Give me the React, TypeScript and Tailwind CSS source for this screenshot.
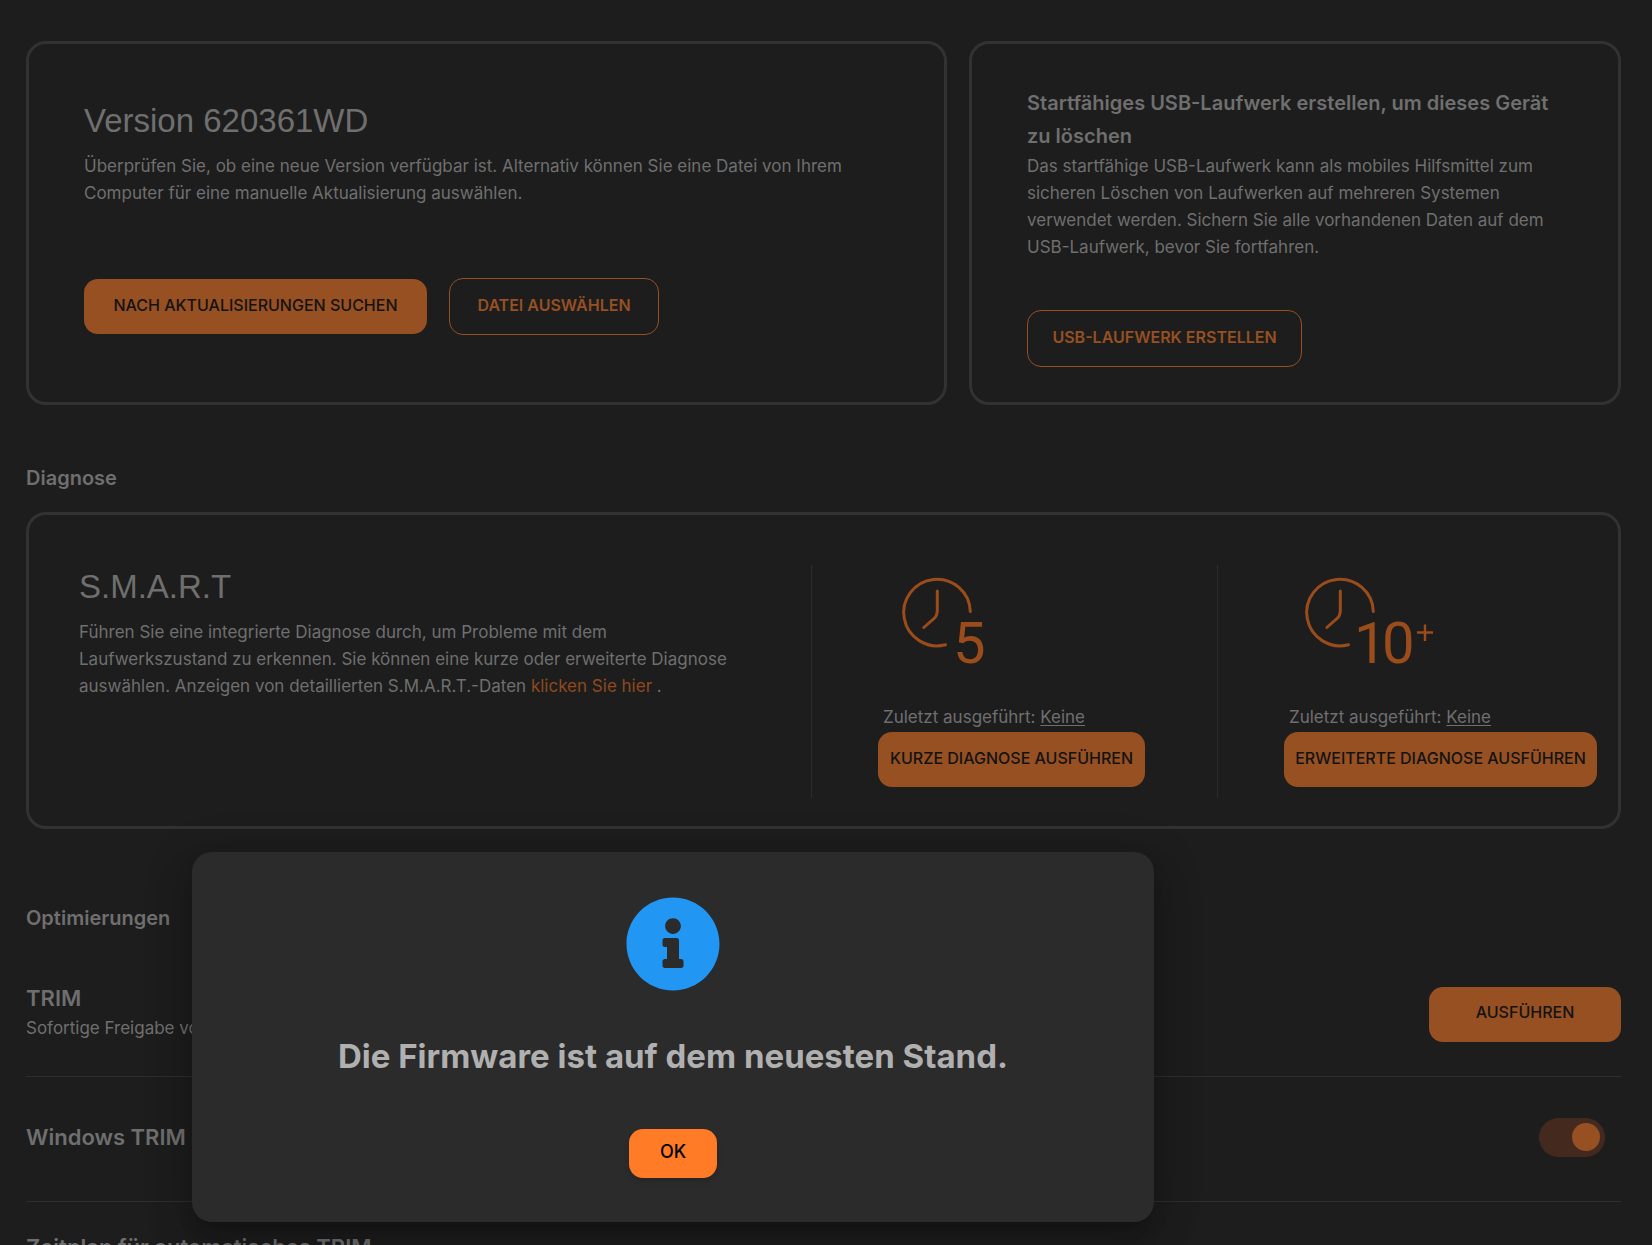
import { useState } from 'react';
import type { ButtonHTMLAttributes, ReactNode } from 'react';
import { FaInfoCircle } from 'react-icons/fa';
import clsx from 'clsx';

type ButtonProps = ButtonHTMLAttributes<HTMLButtonElement> & {
  variant?: 'filled' | 'outline';
};

function Button({ variant = 'filled', className, ...props }: ButtonProps) {
  return (
    <button
      type="button"
      className={clsx(
        'rounded-[14px] text-center text-base whitespace-nowrap pb-1',
        variant === 'filled' && 'h-[55px] bg-[#965022] font-medium text-[#131313]',
        variant === 'outline' && 'h-[57px] border border-[#965022] font-semibold text-[#965022]',
        className
      )}
      {...props}
    />
  );
}

function Card({ className, children }: { className?: string; children: ReactNode }) {
  return <div className={clsx('rounded-[20px] border-3 border-[#323232]', className)}>{children}</div>;
}

function ClockIcon({ label, children }: { label: string; children: ReactNode }) {
  return (
    <svg
      width="160"
      height="112"
      viewBox="0 0 160 112"
      role="img"
      aria-label={label}
      fill="none"
      stroke="#9b4c1b"
      strokeWidth="3"
      strokeLinecap="round"
    >
      {children}
    </svg>
  );
}

// Clock face with a gap at the lower right, where the minutes are written
function ClockFace() {
  return (
    <>
      <path d="M92.3 46.500A33.300 33.300 0 1 0 67.500 79.700" />
      <path d="M59.300 26V46Q59.300 50.500 56 53.500L45.800 62.500" />
    </>
  );
}

interface DiagnosticProps {
  icon: ReactNode;
  action: string;
  buttonClass: string;
}

function Diagnostic({ icon, action, buttonClass }: DiagnosticProps) {
  return (
    <div className="flex h-[233px] flex-col items-start justify-between border-l border-[#2c2c2c] pb-[11px] pl-[66px]">
      {icon}
      <div>
        <p className="pl-[5px] pb-px">
          Zuletzt ausgeführt: <span className="underline underline-offset-2">Keine</span>
        </p>
        <Button className={buttonClass}>{action}</Button>
      </div>
    </div>
  );
}

export default function App() {
  const [showDialog, setShowDialog] = useState(true);
  const [autoTrim, setAutoTrim] = useState(true);

  return (
    <div className="relative h-screen overflow-hidden bg-[#1d1d1d] font-[Inter,sans-serif] text-[17px] leading-[27px] text-[#6f6f6f]">
      <main className="pt-[41px] pr-[31px] pl-[26px]">
        <section className="grid grid-cols-[921fr_652fr] gap-[22px]">
          <Card className="px-[55px] pt-[55px]">
            <h1 className="mb-[10px] font-['Liberation_Sans',sans-serif] text-[33px] leading-[44px]">
              Version 620361WD
            </h1>
            <p>
              Überprüfen Sie, ob eine neue Version verfügbar ist. Alternativ können Sie eine Datei von Ihrem Computer für
              eine manuelle Aktualisierung auswählen.
            </p>
            <div className="mt-[71px] flex items-center gap-[22px]">
              <Button className="w-[343px]">NACH AKTUALISIERUNGEN SUCHEN</Button>
              <Button variant="outline" className="w-[210px]">
                DATEI AUSWÄHLEN
              </Button>
            </div>
          </Card>

          <Card className="px-[55px] pt-[43px] pb-[35px]">
            <h2 className="text-xl leading-[33px] font-semibold">
              Startfähiges USB-Laufwerk erstellen, um dieses Gerät zu löschen
            </h2>
            <p>
              Das startfähige USB-Laufwerk kann als mobiles Hilfsmittel zum sicheren Löschen von Laufwerken auf mehreren
              Systemen verwendet werden. Sichern Sie alle vorhandenen Daten auf dem USB-Laufwerk, bevor Sie fortfahren.
            </p>
            <Button variant="outline" className="mt-[49px] w-[275px]">
              USB-LAUFWERK ERSTELLEN
            </Button>
          </Card>
        </section>

        <section className="mt-[57px]">
          <h2 className="mb-[17px] text-xl leading-[33px] font-semibold">Diagnose</h2>
          <Card className="grid grid-cols-[782fr_406fr_401fr] pt-[50px] pb-7">
            <div className="pr-[70px] pl-[50px]">
              <h3 className="mb-[10px] font-['Liberation_Sans',sans-serif] text-[33px] leading-[44px]">S.M.A.R.T</h3>
              <p>
                Führen Sie eine integrierte Diagnose durch, um Probleme mit dem Laufwerkszustand zu erkennen. Sie können
                eine kurze oder erweiterte Diagnose auswählen. Anzeigen von detaillierten S.M.A.R.T.-Daten{' '}
                <a href="#smart" className="text-[#8f491d]">
                  klicken Sie hier
                </a>{' '}
                .
              </p>
            </div>
            <Diagnostic
              action="KURZE DIAGNOSE AUSFÜHREN"
              buttonClass="w-[267px]"
              icon={
                <ClockIcon label="5 Minuten">
                  <ClockFace />
                  <text x="75" y="98" fill="#9b4c1b" stroke="none" className="font-[Roboto,sans-serif] text-[58px]">
                    5
                  </text>
                </ClockIcon>
              }
            />
            <Diagnostic
              action="ERWEITERTE DIAGNOSE AUSFÜHREN"
              buttonClass="w-[313px]"
              icon={
                <ClockIcon label="Mehr als 10 Minuten">
                  <g transform="translate(-3 0)">
                    <ClockFace />
                  </g>
                  <text x="70 98" y="98" fill="#9b4c1b" stroke="none" className="font-[Roboto,sans-serif] text-[58px]">
                    10
                  </text>
                  <path d="M133 67.500H149M141 59.500V76" strokeWidth="2.400" strokeLinecap="butt" />
                </ClockIcon>
              }
            />
          </Card>
        </section>

        <section className="mt-[73px]">
          <h2 className="text-xl leading-[33px] font-semibold">Optimierungen</h2>
          <div className="flex items-center justify-between border-b border-[#2e2e2e] pt-[49px] pb-8">
            <div className="pb-0.5">
              <h3 className="mb-0.5 text-[22px] leading-[29px] font-semibold">TRIM</h3>
              <p>Sofortige Freigabe von nicht mehr verwendeten Blöcken</p>
            </div>
            <Button className="w-48">AUSFÜHREN</Button>
          </div>
          <div className="flex h-[125px] items-center justify-between border-b border-[#2e2e2e] pr-4 pb-1">
            <label htmlFor="auto-trim" className="text-[22px] leading-[29px] font-semibold">
              Windows TRIM aktivieren
            </label>
            <input
              id="auto-trim"
              type="checkbox"
              role="switch"
              checked={autoTrim}
              onChange={e => setAutoTrim(e.target.checked)}
              className="flex h-[39px] w-[66px] appearance-none items-center rounded-full bg-[#442a1e] px-[5px] before:size-7 before:rounded-full before:bg-[#965022] checked:justify-end"
            />
          </div>
          <h3 className="pt-[31px] text-[22px] leading-[29px] font-semibold">Zeitplan für automatisches TRIM</h3>
        </section>
      </main>

      {showDialog && (
        <div
          role="alertdialog"
          aria-labelledby="dialog-title"
          className="absolute top-[852px] left-48 flex w-[962px] flex-col items-center rounded-[20px] bg-[#2b2b2b] py-11 shadow-[0_11px_15px_-7px_rgba(0,0,0,0.2),0_24px_38px_3px_rgba(0,0,0,0.14),0_9px_46px_8px_rgba(0,0,0,0.12)]"
        >
          <FaInfoCircle className="size-24 text-[#2196f3]" />
          <h2 id="dialog-title" className="mt-10 text-[33px] leading-[48px] font-bold text-[#b0b0b0]">
            Die Firmware ist auf dem neuesten Stand.
          </h2>
          <button
            type="button"
            onClick={() => setShowDialog(false)}
            className="mt-[49px] h-[49px] w-[88px] rounded-[14px] bg-[#ff7b26] pb-1 text-lg font-medium text-black shadow-md"
          >
            OK
          </button>
        </div>
      )}
    </div>
  );
}
